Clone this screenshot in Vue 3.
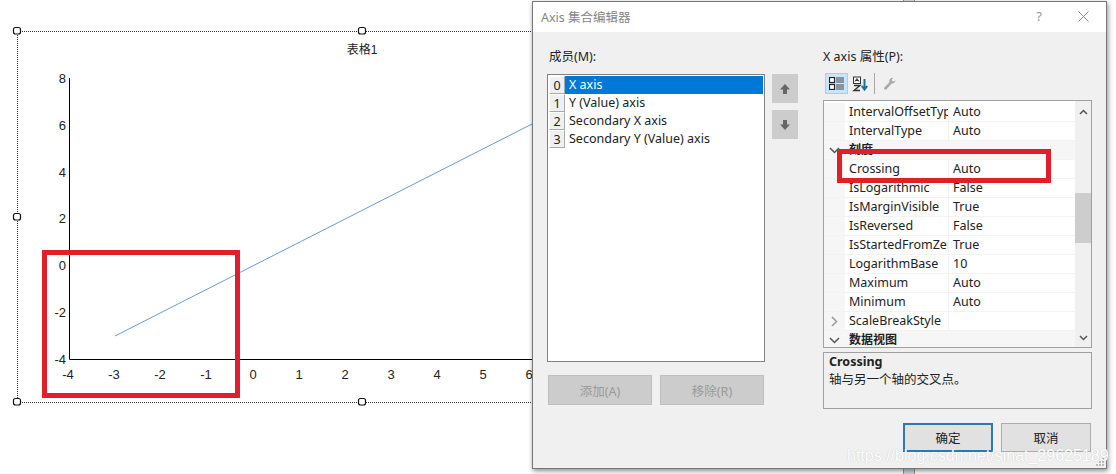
<script setup>
const xLabels = [-4, -3, -2, -1, 0, 1, 2, 3, 4, 5, 6]
const yLabels = [8, 6, 4, 2, 0, -2, -4]
const handles = [[17, 31], [362, 31], [17, 217], [17, 402], [362, 402]]
const members = ['X axis', 'Y (Value) axis', 'Secondary X axis', 'Secondary Y (Value) axis']
const rows = [
  { name: 'IntervalOffsetTyp', value: 'Auto' },
  { name: 'IntervalType', value: 'Auto' },
  { name: '刻度', cat: true },
  { name: 'Crossing', value: 'Auto' },
  { name: 'IsLogarithmic', value: 'False' },
  { name: 'IsMarginVisible', value: 'True' },
  { name: 'IsReversed', value: 'False' },
  { name: 'IsStartedFromZer', value: 'True' },
  { name: 'LogarithmBase', value: '10' },
  { name: 'Maximum', value: 'Auto' },
  { name: 'Minimum', value: 'Auto' },
  { name: 'ScaleBreakStyle', value: '', closed: true },
  { name: '数据视图', cat: true }
]
</script>

<template>
  <div class="page">
    <svg class="chart" width="540" height="474" viewBox="0 0 540 474">
      <rect x="17.5" y="31.5" width="600" height="371" fill="none" stroke="#333" stroke-dasharray="1 1" shape-rendering="crispEdges" />
      <rect v-for="h in handles" :key="h.join()" :x="h[0] - 3.5" :y="h[1] - 3.5" width="7" height="6.5" rx="2" fill="#fff" stroke="#111" stroke-width="1.2" />
      <text x="362" y="54" text-anchor="middle" class="title-text">表格1</text>
      <path d="M69.5 78V359.5H540" fill="none" stroke="#000" />
      <path d="M115 336L532 124" fill="none" stroke="#6a9bd0" />
      <text v-for="(v, i) in yLabels" :key="'y' + v" x="66" :y="83 + i * 46.8" text-anchor="end" class="tick">{{ v }}</text>
      <text v-for="(v, i) in xLabels" :key="'x' + v" :x="(v < 0 ? 68 : 69) + i * 46" y="379" text-anchor="middle" class="tick">{{ v }}</text>
    </svg>
    <div class="red-box red-chart"></div>

    <div class="peek peek-top"></div>
    <div class="peek peek-bottom"></div>

    <section class="dialog">
      <header class="titlebar">
        <span class="title">Axis 集合编辑器</span>
        <span class="help">?</span>
        <svg class="close" width="11" height="11" viewBox="0 0 11 11"><path d="M.5.5l10 10M10.5.5l-10 10" stroke="#8a8a8a" fill="none" /></svg>
      </header>
      <div class="body">
        <div class="members">
          <label class="lbl">成员(M):</label>
          <div class="list-row">
            <ul class="list">
              <li v-for="(m, i) in members" :key="m" class="item">
                <span class="idx">{{ i }}</span>
                <span class="member" :class="{ selected: i === 0 }">{{ m }}</span>
              </li>
            </ul>
            <div class="arrows">
              <button class="arrow">
                <svg width="10" height="10" viewBox="0 0 10 10"><path d="M5 0L10 5.5H7V10H3V5.5H0Z" fill="#666" /></svg>
              </button>
              <button class="arrow">
                <svg width="10" height="10" viewBox="0 0 10 10"><path d="M5 10L10 4.5H7V0H3V4.5H0Z" fill="#666" /></svg>
              </button>
            </div>
          </div>
          <div class="add-row">
            <button class="disabled">添加(A)</button>
            <button class="disabled">移除(R)</button>
          </div>
        </div>

        <div class="props">
          <label class="lbl prop-lbl">X axis 属性(P):</label>
          <div class="toolbar">
            <span class="tool active">
              <svg width="15" height="13" viewBox="0 0 15 13">
                <rect x=".5" y=".5" width="5" height="5" fill="#fff" stroke="#222" stroke-width="1.2" />
                <rect x=".5" y="7.5" width="5" height="5" fill="#fff" stroke="#222" stroke-width="1.2" />
                <path d="M7 1h8M7 3h8M7 5h8M7 8h8M7 10h8M7 12h8" stroke="#444" />
              </svg>
            </span>
            <span class="tool sort">
              <svg width="17" height="16" viewBox="0 0 17 16">
                <rect x="1.5" y="1" width="7" height="6.5" fill="#fff" stroke="#333" />
                <path d="M3 5.5L5 2.5L7 5.5M3.5 4.5H6.5" stroke="#333" fill="none" />
                <path d="M2 9.5H8L2 14.5H8" stroke="#333" stroke-width="1.4" fill="none" />
                <path d="M12.5 3V13M9.8 10L12.5 13.5L15.2 10" stroke="#1c6e9e" stroke-width="2" fill="none" />
              </svg>
            </span>
            <span class="tool-sep"></span>
            <span class="tool wrench">
              <svg width="13" height="13" viewBox="0 0 13 13"><path d="M12.5 3.2C12.6 5.4 10.6 7 8.6 6.4L3.6 12.2C2.8 13 .9 12.5 1 10.9L6.4 5.2C5.8 3 7.6.6 10 .9L8.5 3 9.6 4.4 11.5 4.2Z" fill="#a8a8a8" /></svg>
            </span>
          </div>
          <div class="grid">
            <div class="grid-rows">
              <div v-for="r in rows" :key="r.name" class="row" :class="{ cat: r.cat }">
                <span class="gutter">
                  <svg v-if="r.cat" width="11" height="7" viewBox="0 0 11 7"><path d="M1 1L5.5 5.5L10 1" stroke="#555" stroke-width="1.5" fill="none" /></svg>
                  <svg v-else-if="r.closed" width="7" height="11" viewBox="0 0 7 11"><path d="M1 1L5.5 5.5L1 10" stroke="#999" stroke-width="1.5" fill="none" /></svg>
                </span>
                <span class="name">{{ r.name }}</span>
                <span v-if="!r.cat" class="value">{{ r.value }}</span>
              </div>
            </div>
            <div class="scrollbar">
              <svg width="9" height="6" viewBox="0 0 9 6"><path d="M1 5L4.5 1.5L8 5" stroke="#555" stroke-width="1.5" fill="none" /></svg>
              <div class="track"><div class="thumb"></div></div>
              <svg width="9" height="6" viewBox="0 0 9 6"><path d="M1 1L4.5 4.5L8 1" stroke="#555" stroke-width="1.5" fill="none" /></svg>
            </div>
          </div>
          <div class="desc">
            <strong>Crossing</strong>
            <p>轴与另一个轴的交叉点。</p>
          </div>
        </div>
      </div>
      <footer class="footer">
        <button class="btn primary">确定</button>
        <button class="btn">取消</button>
      </footer>
      <svg class="grip" width="10" height="10" viewBox="0 0 10 10"><path d="M7 1h2v2H7zM4 4h2v2H4zM7 4h2v2H7zM1 7h2v2H1zM4 7h2v2H4zM7 7h2v2H7z" fill="#bbb" /></svg>
    </section>

    <div class="red-box red-prop"></div>
    <span class="watermark">https://blog.csdn.net/sinat_29625189</span>
  </div>
</template>

<style>
html, body { margin: 0; background: #fff; }
</style>

<style scoped>
.page {
  position: relative;
  width: 1116px;
  height: 474px;
  overflow: hidden;
  background: #fff;
  font-family: "Noto Sans", "Noto Sans CJK SC", sans-serif;
  font-size: 12.5px;
  color: #222;
}
.chart { position: absolute; left: 0; top: 0; }
.tick { font: 13px "Liberation Sans", sans-serif; fill: #222; }
.title-text { font: 12px "Liberation Sans", "Noto Sans CJK SC", sans-serif; fill: #222; }
.red-box { position: absolute; border: 5px solid #e11f2b; box-sizing: border-box; }
.red-chart { left: 42px; top: 250px; width: 198px; height: 148px; }
.red-prop { left: 837px; top: 149px; width: 214px; height: 34px; }
.peek { position: absolute; left: 903px; width: 12px; background: #ddd; border: 1px solid #999; border-width: 0 1px; box-sizing: border-box; }
.peek-top { top: 0; height: 1px; }
.peek-bottom { top: 468px; height: 6px; background: #cdd8e4; }

.dialog {
  position: absolute;
  left: 532px;
  top: 1px;
  width: 575px;
  height: 468px;
  box-sizing: border-box;
  border: 1px solid #777;
  background: #f0f0f0;
  box-shadow: 1px 2px 5px rgba(0, 0, 0, .45);
  display: flex;
  flex-direction: column;
}
.titlebar {
  height: 30px;
  flex: none;
  box-sizing: border-box;
  background: #fff;
  display: flex;
  align-items: center;
  padding: 0 17px 2px 8px;
}
.title { color: #858585; font-size: 12.5px; flex: 1; }
.help { color: #999; font-size: 13px; margin-right: 36px; }
.body { flex: 1; display: flex; padding: 0 0 0 14px; min-height: 0; }
.lbl { display: block; height: 18px; line-height: 18px; padding-left: 2px; }
.members { width: 261px; padding-top: 16px; flex: none; }
.prop-lbl { padding-left: 0; }
.list-row { display: flex; gap: 7px; margin-top: 8px; }
.list {
  width: 218px;
  height: 288px;
  box-sizing: border-box;
  list-style: none;
  margin: 0;
  padding: 1px;
  border: 1px solid #828282;
  background: #fff;
}
.item { display: flex; height: 18px; line-height: 18px; }
.idx {
  width: 16px;
  flex: none;
  box-sizing: border-box;
  text-align: center;
  background: #f0f0f0;
  border: 1px solid #aaa;
  border-top-color: #fff;
  border-left-color: #fff;
}
.member { flex: 1; padding-left: 4px; }
.member.selected { background: #0078d7; color: #fff; }
.arrows { display: flex; flex-direction: column; gap: 7px; }
.arrow {
  width: 26px;
  height: 29px;
  padding: 0;
  border: 0;
  background: #ccc;
  display: flex;
  align-items: center;
  justify-content: center;
}
.add-row { display: flex; gap: 8px; margin: 13px 0 0 1px; }
button { font: inherit; }
.disabled {
  width: 104px;
  height: 30px;
  padding: 0;
  border: 1px solid #bfbfbf;
  background: #ccc;
  color: #9a9a9a;
}
.props { width: 269px; flex: none; padding-top: 16px; margin-left: 15px; }
.toolbar { display: flex; align-items: center; height: 33px; margin-top: 1px; }
.tool { display: flex; align-items: center; justify-content: center; }
.tool.active { width: 23px; height: 21px; margin-left: 2px; background: #cce4f7; border: 1px solid #a6cde9; box-sizing: border-box; }
.tool.sort { width: 17px; margin-left: 4px; }
.tool-sep { width: 1px; height: 21px; background: #a8a8a8; margin-left: 5px; }
.tool.wrench { margin-left: 8px; }
.grid {
  display: flex;
  height: 248px;
  box-sizing: border-box;
  border: 1px solid #a0a0a0;
  background: #fff;
  overflow: hidden;
}
.grid-rows { flex: 1; padding-top: 2px; min-width: 0; }
.row { display: flex; height: 19px; line-height: 18px; box-sizing: border-box; border-bottom: 1px solid #f3f3f3; }
.gutter { width: 21px; flex: none; background: #f6f6f6; display: flex; align-items: center; justify-content: center; }
.name { flex: none; overflow: hidden; padding-left: 4px; box-sizing: content-box; white-space: nowrap; border-right: 1px solid #f3f3f3; width: 99px; }
.value { padding-left: 4px; }
.row.cat { background: #f6f6f6; }
.row.cat .name { font-weight: 700; font-size: 12px; border-right: 0; }
.scrollbar {
  width: 16px;
  flex: none;
  background: #f0f0f0;
  display: flex;
  flex-direction: column;
  align-items: center;
  justify-content: space-between;
  padding: 8px 0 6px;
  box-sizing: border-box;
}
.track { flex: 1; align-self: stretch; padding-top: 78px; }
.thumb { height: 50px; background: #cdcdcd; }
.desc {
  height: 57px;
  margin-top: 4px;
  box-sizing: border-box;
  border: 1px solid #a0a0a0;
  padding: 0 5px;
  line-height: 18px;
}
.desc strong { display: block; }
.desc p { margin: 0; }
.footer { position: absolute; right: 15px; top: 421px; display: flex; gap: 8px; }
.btn {
  width: 90px;
  height: 29px;
  padding: 0;
  border: 1px solid #adadad;
  background: #e1e1e1;
  color: #222;
}
.btn.primary { border: 2px solid #2b79ad; }
.grip { position: absolute; right: 1px; bottom: 1px; }
.watermark {
  position: absolute;
  left: 847px;
  top: 447px;
  font: 16px "Liberation Sans", sans-serif;
  color: #fff;
  text-shadow: 0 0 1px rgba(150, 150, 150, .6);
  white-space: nowrap;
}
</style>
